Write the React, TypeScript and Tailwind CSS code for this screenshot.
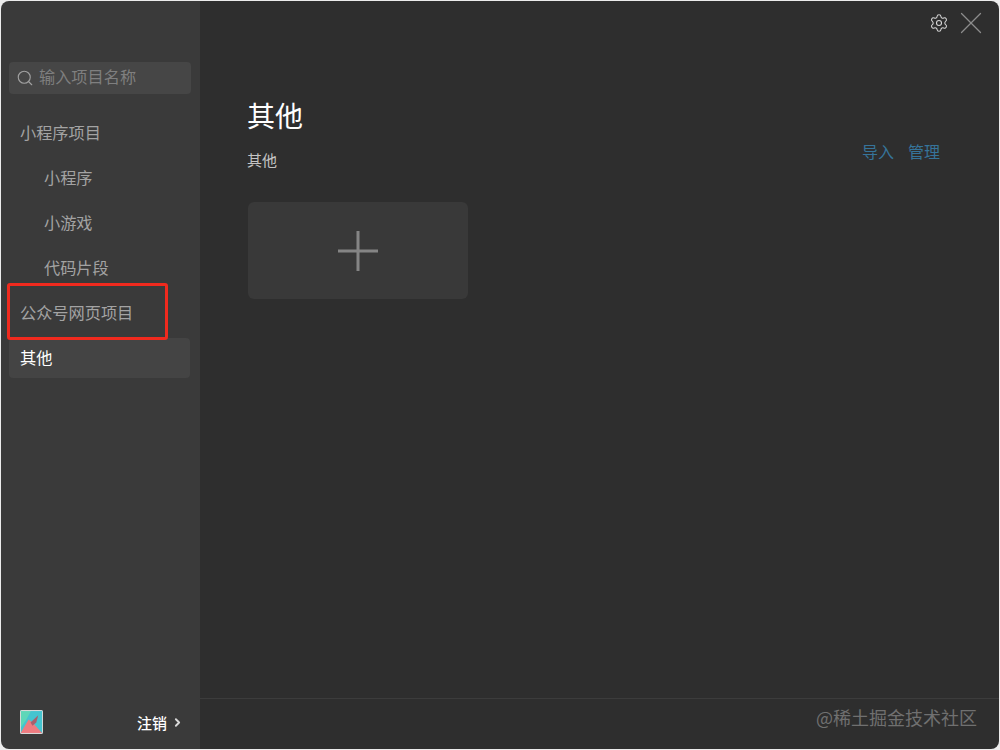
import { ChevronRight, Search, Settings, X } from "lucide-react"

const font = { fontFamily: '"Noto Sans CJK SC", "Liberation Sans", sans-serif' }

const navItems = [
  { label: "小程序项目", indent: false },
  { label: "小程序", indent: true },
  { label: "小游戏", indent: true },
  { label: "代码片段", indent: true },
  { label: "公众号网页项目", indent: false },
]

function Avatar() {
  return (
    <svg width="23" height="24" viewBox="0 0 24 23" preserveAspectRatio="none" className="rounded-[2px]">
      <rect width="24" height="23" fill="#45c4cf" />
      <path d="M0 23 L9 9 L14 13 L24 23 Z" fill="#ee7b80" />
      <path d="M0 0 H12 L6 10 L0 18 Z" fill="#5ed6b8" />
      <path d="M11 12 L19 5 L17 12 L13 15 Z" fill="#a8606c" />
      <rect x="0.5" y="0.5" width="23" height="22" fill="none" stroke="#d8d8d8" />
    </svg>
  )
}

export default function App() {
  return (
    <div style={font} className="relative h-[750px] w-[1000px] overflow-hidden bg-[#ececec] p-px">
      <div className="flex h-full overflow-hidden rounded-lg">
        <aside className="flex w-[199px] shrink-0 flex-col bg-[#3a3a3a]">
          <div className="mt-[61px] ml-2 mr-2 flex h-8 w-[182px] items-center rounded-[4px] bg-[#464646] pl-[7px]">
            <Search size={18} strokeWidth={1.5} className="text-[#a0a0a0]" />
            <span className="ml-[5px] -mt-[4px] text-[16.2px] text-[#7f7f7f]">输入项目名称</span>
          </div>
          <nav className="mt-4 flex flex-col">
            {navItems.map((item) => (
              <div
                key={item.label}
                className={`flex h-[45px] items-center text-[16.2px] text-[#a3a3a3] ${item.indent ? "pl-[43px]" : "pl-[19px]"}`}
              >
                {item.label}
              </div>
            ))}
            <div className="ml-2 mt-[3px] flex h-10 w-[181px] items-center rounded-[4px] bg-[#444444] pb-[2px] pl-[11px] text-[16.2px] text-white">
              其他
            </div>
          </nav>
          <div className="mt-auto mb-[15px] flex items-center pl-[19px] pr-[16px]">
            <Avatar />
            <span className="ml-auto text-[15px] leading-none font-medium text-white">注销</span>
            <ChevronRight size={13} strokeWidth={3.5} className="ml-[4px] text-[#d8d8d8]" />
          </div>
        </aside>

        <main className="flex min-w-0 flex-1 flex-col bg-[#2e2e2e]">
          <div className="flex h-[44px] items-center justify-end gap-[3px] pr-[9px]">
            <Settings size={20} strokeWidth={1.3} className="text-[#d4d4d4]" />
            <X size={38} strokeWidth={0.8} className="text-[#8c8c8c]" />
          </div>
          <div className="flex-1 pl-[47px] pr-[59px]">
            <h1 className="mt-[50px] text-[28px] leading-[40px] font-normal text-white">其他</h1>
            <div className="mt-[15px] flex items-start justify-between">
              <span className="text-[15px] leading-5 text-[#c4c4c4]">其他</span>
              <div className="-mt-[9px] flex gap-[14px] text-base leading-5 text-[#36749a]">
                <span>导入</span>
                <span>管理</span>
              </div>
            </div>
            <button className="mt-[32px] ml-px flex h-[97px] w-[220px] items-center justify-center rounded-[6px] bg-[#393939]">
              <svg width="40" height="40" viewBox="0 0 40 40" fill="#858585">
                <rect x="18.5" y="0" width="3" height="40" />
                <rect x="0" y="18.5" width="40" height="3" />
              </svg>
            </button>
          </div>
          <div className="h-[51px] shrink-0 border-t border-[#3c3c3c]" />
        </main>
      </div>

      <div className="absolute top-[283px] left-[7px] h-[57px] w-[161px] rounded-[3px] border-[3px] border-[#f02a1e]" />
      <div className="absolute top-[703px] left-[816px] text-lg leading-7 text-[#707070]">@稀土掘金技术社区</div>
    </div>
  )
}
